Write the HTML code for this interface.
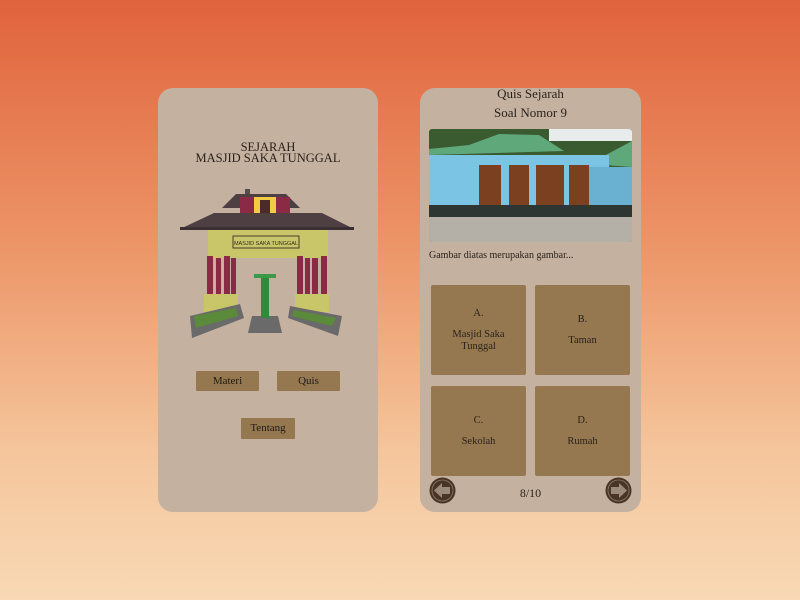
<!DOCTYPE html>
<html><head><style>
*{margin:0;padding:0;box-sizing:border-box}
body{width:800px;height:600px;overflow:hidden;background:linear-gradient(180deg,#e0633d 0%,#ec9466 40%,#f5c59b 75%,#f8d9b5 100%);font-family:"Liberation Serif",serif;position:relative;color:#2a221c}
.card{position:absolute;top:88px;height:424px;background:#c5b19f;border-radius:15px}
.btn{position:absolute;background:#95784f;color:#1f1a14;font-size:11px;text-align:center;border-radius:1px}
.ans{position:absolute;width:95px;height:90px;background:#95784f;border-radius:2px;font-size:10.5px;text-align:center;display:flex;flex-direction:column;justify-content:center;line-height:12px}
.ans b{font-weight:normal;display:block;margin-bottom:9px}
.t{position:absolute;text-align:center;width:100%}
</style></head><body>
<div class="card" style="left:158px;width:220px">
 <div class="t" style="top:54px;font-size:12.5px;line-height:11px">SEJARAH<br>MASJID SAKA TUNGGAL</div>
 <svg style="position:absolute;left:20px;top:88px" width="182" height="165" viewBox="0 0 182 165">
  <rect x="67" y="13" width="5" height="8" fill="#5a4c4c"/>
  <polygon points="58,18 108,18 122,32 44,32" fill="#4e3f42"/>
  <rect x="62" y="21" width="50" height="20" fill="#8a2a45"/>
  <rect x="76" y="21" width="22" height="18" fill="#f2cc45"/>
  <rect x="82" y="24" width="10" height="14" fill="#4a2a2a"/>
  <polygon points="36,37 144,37 176,53 2,53" fill="#4e3f42"/>
  <rect x="2" y="51" width="174" height="3" fill="#3a2f33"/>
  <rect x="30" y="54" width="120" height="28" fill="#c9c66a"/>
  <rect x="55" y="60" width="66" height="12" fill="#c8c66a" stroke="#4a3a2a"/>
  <text x="88" y="69" font-size="5.5" text-anchor="middle" font-family="Liberation Sans" fill="#3a2a1a">MASJID SAKA TUNGGAL</text>
  <g fill="#8a2a45"><rect x="29" y="80" width="6" height="40"/><rect x="38" y="82" width="5" height="38"/><rect x="46" y="80" width="6" height="40"/><rect x="53" y="82" width="5" height="38"/>
  <rect x="119" y="80" width="6" height="40"/><rect x="127" y="82" width="5" height="38"/><rect x="134" y="82" width="6" height="40"/><rect x="143" y="80" width="6" height="40"/></g>
  <g fill="#c9c66a"><rect x="26" y="118" width="34" height="18"/><rect x="117" y="118" width="34" height="18"/></g>
  <polygon points="12,140 62,128 66,142 14,162" fill="#6a6a6a"/>
  <polygon points="16,140 58,132 60,140 18,152" fill="#5a8a3a"/>
  <polygon points="112,130 164,140 160,160 110,142" fill="#6a6a6a"/>
  <polygon points="116,134 158,142 154,150 114,140" fill="#5a8a3a"/>
  <polygon points="74,140 100,140 104,157 70,157" fill="#6a6a6a"/>
  <rect x="83" y="100" width="8" height="42" fill="#2f8a3a"/>
  <rect x="76" y="98" width="22" height="4" fill="#3a9a4a"/>
 </svg>
 <div class="btn" style="left:38px;top:283px;width:63px;height:20px;line-height:20px">Materi</div>
 <div class="btn" style="left:119px;top:283px;width:63px;height:20px;line-height:20px">Quis</div>
 <div class="btn" style="left:83px;top:330px;width:54px;height:21px;line-height:21px">Tentang</div>
</div>
<div class="card" style="left:420px;width:221px">
 <div class="t" style="top:-2px;font-size:13px">Quis Sejarah</div>
 <div class="t" style="top:17px;font-size:13px">Soal Nomor 9</div>
 <svg style="position:absolute;left:9px;top:41px;border-radius:3px" width="203" height="113" viewBox="0 0 203 113">
  <rect width="203" height="113" fill="#3a5a30"/>
  <rect x="120" y="0" width="83" height="12" fill="#e8ecec"/>
  <polygon points="0,20 40,16 70,5 110,6 135,22 0,26" fill="#5fa87a"/>
  <polygon points="160,35 203,12 203,38" fill="#5fa87a"/>
  <rect x="0" y="26" width="180" height="52" fill="#7cc4e4"/>
  <rect x="160" y="38" width="43" height="40" fill="#6ab0d0"/>
  <g fill="#7a4020"><rect x="50" y="36" width="22" height="40"/><rect x="80" y="36" width="20" height="40"/><rect x="107" y="36" width="28" height="40"/><rect x="140" y="36" width="20" height="40"/></g>
  <rect x="0" y="76" width="203" height="12" fill="#2e3634"/>
  <rect x="0" y="88" width="203" height="25" fill="#b4b0a8"/>
 </svg>
 <div style="position:absolute;left:9px;top:162px;font-size:10px">Gambar diatas merupakan gambar...</div>
 <div class="ans" style="left:11px;top:197px"><b>A.</b>Masjid Saka<br>Tunggal</div>
 <div class="ans" style="left:115px;top:197px"><b>B.</b>Taman</div>
 <div class="ans" style="left:11px;top:298px"><b>C.</b>Sekolah</div>
 <div class="ans" style="left:115px;top:298px"><b>D.</b>Rumah</div>
 <svg style="position:absolute;left:9px;top:389px" width="27" height="27" viewBox="0 0 27 27"><circle cx="13.5" cy="13.5" r="13" fill="#4a3426"/><circle cx="13.5" cy="13.5" r="10.5" fill="none" stroke="#8a7a6a" stroke-width=".8"/><polygon points="5,13.5 13,6 13,10 21,10 21,17 13,17 13,21" fill="#9a8a7a"/></svg>
 <div style="position:absolute;left:0;width:221px;text-align:center;top:398px;font-size:12px">8/10</div>
 <svg style="position:absolute;left:185px;top:389px" width="27" height="27" viewBox="0 0 27 27"><circle cx="13.5" cy="13.5" r="13" fill="#4a3426"/><circle cx="13.5" cy="13.5" r="10.5" fill="none" stroke="#8a7a6a" stroke-width=".8"/><polygon points="22,13.5 14,6 14,10 6,10 6,17 14,17 14,21" fill="#9a8a7a"/></svg>
</div>
</body></html>
